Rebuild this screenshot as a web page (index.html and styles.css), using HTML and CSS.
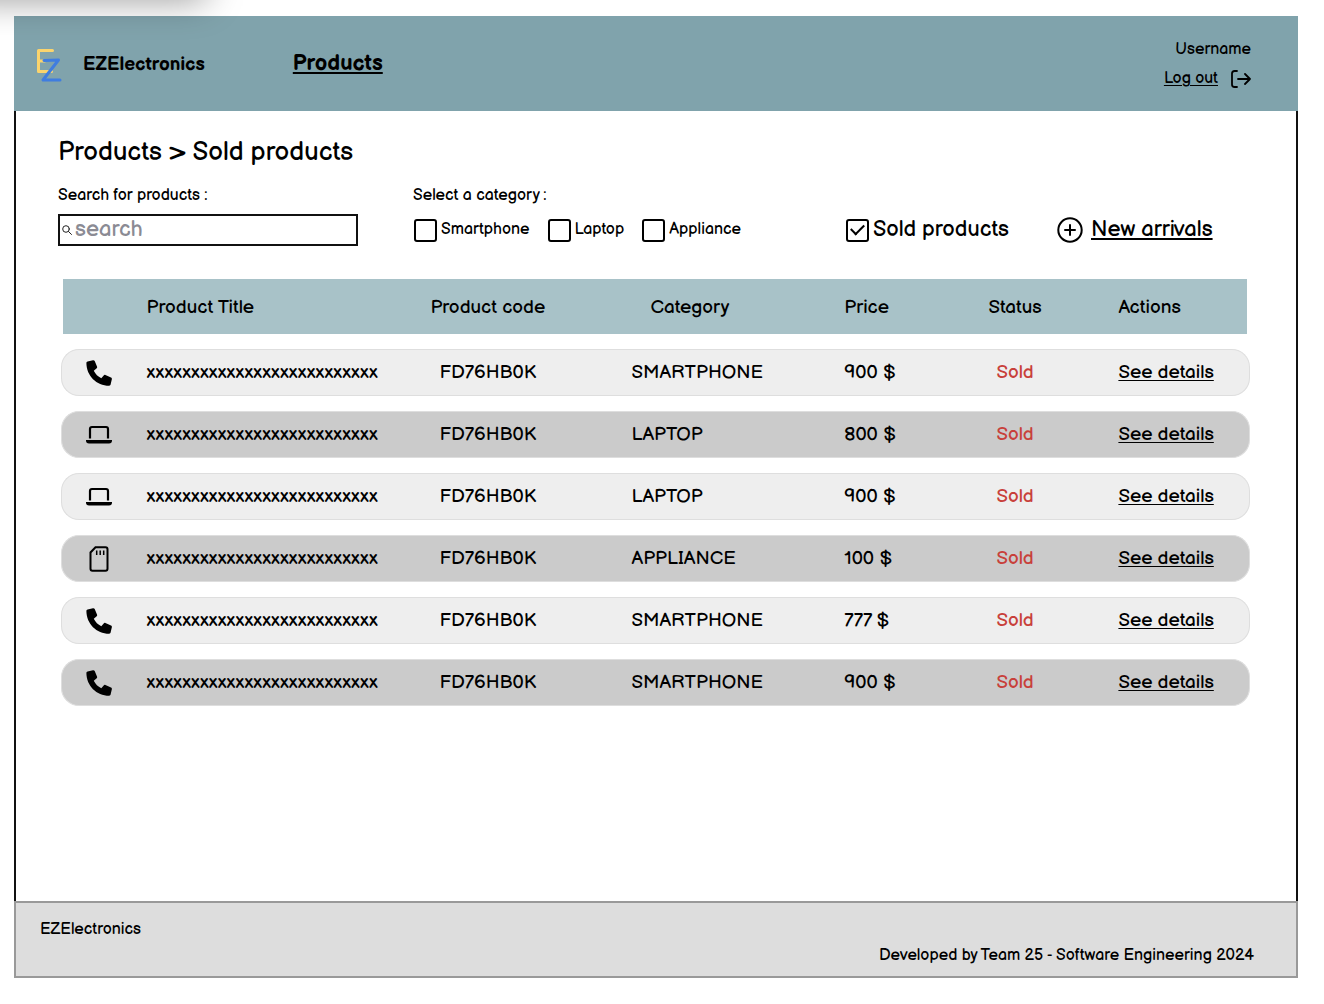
FILE: index.html
```html
<!DOCTYPE html>
<html lang="en">
<head>
<meta charset="utf-8">
<meta name="viewport" content="width=device-width, initial-scale=1">
<title>EZElectronics - Sold products</title>
<link rel="stylesheet" href="styles.css">
</head>
<body>
<svg class="sprite" aria-hidden="true">
  <symbol id="phone" viewBox="0 0 26 26"><path d="M1.6 1.5 7 .2c.7-.2 1.4.2 1.7.8l2.4 5.700c.2.600.1 1.200-.4 1.600L7.800 10.800c1.600 3.300 4.200 5.900 7.500 7.500l2.400-2.900c.4-.5 1.100-.7 1.700-.4l5.600 2.400c.7.3 1 1 .9 1.600L24.600 24.500c-.1.7-.7 1.200-1.400 1.200C10.500 25.700.4 15.500.4 2.900c0-.700.5-1.300 1.200-1.400z"/></symbol>
  <symbol id="laptop" viewBox="0 0 26 26"><path d="M4 16.500V7a2 2 0 0 1 2-2h14a2 2 0 0 1 2 2v9.500" fill="none" stroke="currentColor" stroke-width="2.200"/><path d="M0 18h26v.500a3 3 0 0 1-3 3H3a3 3 0 0 1-3-3z"/></symbol>
  <symbol id="card" viewBox="0 0 26 26"><g fill="none" stroke="currentColor" stroke-width="2"><path d="M9.500 1.200H19.500a2 2 0 0 1 2 2v19.600a2 2 0 0 1-2 2h-13a2 2 0 0 1-2-2V6.500z"/><path d="M10.700 4.500v4.500M14.200 4.500v4.500M17.700 4.500v4.500" stroke-width="1.500"/></g></symbol>
</svg>

<div class="page">
  <header class="topbar">
    <a class="brand" href="#">
      <svg class="logo" viewBox="0 0 26 34" aria-hidden="true" fill="none" stroke-linecap="round" stroke-linejoin="round" stroke-width="3"><path d="M16.500 2.500H2.500v21h13M2.500 13h6" stroke="#fbd46d"/><path d="M8 12.500 22.500 12 7 32H24" stroke="#3f7de0"/></svg>
      <span>EZElectronics</span>
    </a>
    <nav><a class="nav-link" href="#">Products</a></nav>
    <div class="account">
      <span>Username</span>
      <a class="logout" href="#"><span class="underlined">Log out</span>
        <svg class="logout-icon" viewBox="0 0 20 18" aria-hidden="true" fill="none" stroke="currentColor" stroke-width="1.800" stroke-linecap="round" stroke-linejoin="round"><path d="M6 1H3.500Q1 1 1 3.500v11Q1 17 3.500 17H6M7 9h12M14 4l5 5-5 5"/></svg>
      </a>
    </div>
  </header>

  <main class="content">
    <h1>Products &gt; Sold products</h1>
    <form class="filters">
      <div class="field">
        <label class="caption" for="search">Search for products :</label>
        <div class="search">
          <svg viewBox="0 0 10 10" aria-hidden="true" fill="none" stroke="#222" stroke-linecap="round"><circle cx="4" cy="4" r="3.300"/><path d="M6.500 6.500 9.500 9.500"/></svg>
          <input id="search" type="text" placeholder="search">
        </div>
      </div>
      <fieldset class="field">
        <legend class="caption">Select a category :</legend>
        <div class="choices">
          <label><input type="checkbox">Smartphone</label>
          <label><input type="checkbox">Laptop</label>
          <label><input type="checkbox">Appliance</label>
        </div>
      </fieldset>
      <label class="sold-filter"><input type="checkbox" checked>Sold products</label>
      <a class="arrivals" href="#">
        <svg viewBox="0 0 26 26" aria-hidden="true" fill="none" stroke="currentColor" stroke-width="2" stroke-linecap="round"><circle cx="13" cy="13" r="11.700"/><path d="M13 8v10M8 13h10"/></svg>
        <span class="underlined">New arrivals</span>
      </a>
    </form>

    <table class="products">
      <colgroup><col class="c-icon"><col class="c-title"><col class="c-code"><col class="c-category"><col class="c-price"><col class="c-status"><col class="c-actions"></colgroup>
      <thead>
        <tr><th></th><th>Product Title</th><th class="code">Product code</th><th class="code">Category</th><th class="price">Price</th><th class="status">Status</th><th class="actions">Actions</th></tr>
      </thead>
      <tbody>
        <tr><td class="icon"><svg><use href="#phone"/></svg></td><td class="title">xxxxxxxxxxxxxxxxxxxxxxxxxx</td><td class="code">FD76HB0K</td><td class="category">SMARTPHONE</td><td class="price">900 $</td><td class="status">Sold</td><td class="actions"><a href="#">See details</a></td></tr>
        <tr><td class="icon"><svg><use href="#laptop"/></svg></td><td class="title">xxxxxxxxxxxxxxxxxxxxxxxxxx</td><td class="code">FD76HB0K</td><td class="category">LAPTOP</td><td class="price">800 $</td><td class="status">Sold</td><td class="actions"><a href="#">See details</a></td></tr>
        <tr><td class="icon"><svg><use href="#laptop"/></svg></td><td class="title">xxxxxxxxxxxxxxxxxxxxxxxxxx</td><td class="code">FD76HB0K</td><td class="category">LAPTOP</td><td class="price">900 $</td><td class="status">Sold</td><td class="actions"><a href="#">See details</a></td></tr>
        <tr><td class="icon"><svg><use href="#card"/></svg></td><td class="title">xxxxxxxxxxxxxxxxxxxxxxxxxx</td><td class="code">FD76HB0K</td><td class="category">APPLIANCE</td><td class="price">100 $</td><td class="status">Sold</td><td class="actions"><a href="#">See details</a></td></tr>
        <tr><td class="icon"><svg><use href="#phone"/></svg></td><td class="title">xxxxxxxxxxxxxxxxxxxxxxxxxx</td><td class="code">FD76HB0K</td><td class="category">SMARTPHONE</td><td class="price">777 $</td><td class="status">Sold</td><td class="actions"><a href="#">See details</a></td></tr>
        <tr><td class="icon"><svg><use href="#phone"/></svg></td><td class="title">xxxxxxxxxxxxxxxxxxxxxxxxxx</td><td class="code">FD76HB0K</td><td class="category">SMARTPHONE</td><td class="price">900 $</td><td class="status">Sold</td><td class="actions"><a href="#">See details</a></td></tr>
      </tbody>
    </table>
  </main>

  <footer class="footer">
    <span>EZElectronics</span>
    <span class="credit">Developed by Team 25 - Software Engineering 2024</span>
  </footer>
</div>
</body>
</html>
```
FILE: styles.css
```css
* { box-sizing: border-box; }

body {
  margin: 0;
  min-height: 100vh;
  padding: 16px 26px 26px 14px;
  display: flex;
  background: #fff;
  color: #000;
  font: 400 19px/24px "Balsamiq Sans", Lato, "Noto Sans", sans-serif;
}

/* soft shadow falling in from the top left corner */
body::before {
  content: "";
  position: absolute;
  top: -40px;
  left: -40px;
  width: 246px;
  height: 40px;
  box-shadow: 0 0 36px rgba(0, 0, 0, .4);
  pointer-events: none;
}

a { color: inherit; text-decoration: none; }
svg { display: block; flex: none; fill: currentColor; }
.sprite { display: none; }
.underlined { text-decoration: underline; text-underline-offset: 2px; }

.page { flex: 1; min-width: 0; display: flex; flex-direction: column; }

.topbar {
  min-height: 95px;
  padding: 2px 47px 0 22px;
  display: flex;
  align-items: center;
  background: #80a3ac;
}
.brand { display: flex; align-items: center; gap: 21px; font-weight: 700; }
.logo { width: 26px; height: 34px; fill: none; }
.nav-link {
  margin-left: 88px;
  font-size: 22px;
  font-weight: 700;
  text-decoration: underline;
  text-underline-offset: 2px;
}
.account {
  margin-left: auto;
  display: flex;
  flex-direction: column;
  align-items: flex-end;
  gap: 5px;
  font-size: 16px;
}
.logout { display: flex; align-items: center; gap: 13px; }
.logout-icon { width: 20px; height: 18px; fill: none; }

.content {
  flex: 1;
  padding: 26px 46px 30px 42px;
  border: solid #111;
  border-width: 0 2px;
}
h1 { margin: 0; font-size: 26px; font-weight: 400; line-height: 32px; }

.filters {
  margin-top: 15px;
  display: grid;
  grid-template-columns: 355fr 433fr 211fr 193fr;
  align-items: end;
}
.field { margin: 0; padding: 0; border: 0; min-width: 0; }
.caption { display: block; padding: 0; font-size: 16px; line-height: 24px; }
.search {
  width: 300px;
  max-width: 100%;
  height: 32px;
  margin-top: 6px;
  padding: 0 2px;
  display: flex;
  align-items: center;
  gap: 3px;
  border: 2px solid #111;
}
.search svg { width: 10px; height: 10px; fill: none; }
.search input {
  flex: 1;
  min-width: 0;
  padding: 0;
  border: 0;
  outline: 0;
  background: none;
  font: inherit;
  font-size: 22px;
}
.search input::placeholder { color: #8b8b94; opacity: 1; }

.choices { height: 32px; margin-top: 6px; padding-left: 1px; display: flex; align-items: center; gap: 18px; font-size: 16px; }
.choices label, .sold-filter { display: flex; align-items: center; gap: 4px; white-space: nowrap; }
.sold-filter, .arrivals { height: 32px; font-size: 22px; }
.arrivals { display: flex; align-items: center; gap: 8px; white-space: nowrap; }
.arrivals svg { width: 26px; height: 26px; fill: none; }

input[type="checkbox"] {
  appearance: none;
  flex: none;
  width: 23px;
  height: 23px;
  margin: 0;
  display: grid;
  place-items: center;
  border: 2px solid #000;
  border-radius: 3px;
}
input[type="checkbox"]:checked::before {
  content: "";
  width: 11px;
  height: 6px;
  margin-bottom: 4px;
  border: solid #000;
  border-width: 0 0 2px 2px;
  rotate: -45deg;
}

.products {
  width: calc(100% - 3px);
  margin: 18px 0 0 3px;
  table-layout: fixed;
  border-collapse: separate;
  border-spacing: 0 15px;
}
.c-icon { width: 7.2%; }
.c-title { width: 22.5%; }
.c-code { width: 12.4%; }
.c-category { width: 21.6%; }
.c-price { width: 11.9%; }
.c-status { width: 9.3%; }
.products th, .products td { padding: 0; text-align: left; font-weight: 400; white-space: nowrap; }
.products th { height: 55px; padding-top: 3px; background: #a8c2c8; }
.products th:first-child { border-left: 2px solid #fff; }
.products th:last-child { border-right: 3px solid #fff; }
.products td { height: 47px; border: solid #dedede; border-width: 1px 0; background: #eee; }
.products tr:nth-child(even) td { background: #cbcbcb; }
.products td:first-child { border-left-width: 1px; border-radius: 18px 0 0 18px; }
.products td:last-child { border-right-width: 1px; border-radius: 0 18px 18px 0; }
.products .icon { padding-left: 24px; }
.icon svg { width: 26px; height: 26px; }
.products .code, .products .status { text-align: center; }
.products .category { padding-left: 70px; }
.products .price { padding-left: 26px; }
.products td.status { color: #c8403a; }
.products .actions { padding-left: 48px; }
.actions a { text-decoration: underline; text-underline-offset: 2px; }

.footer {
  min-height: 77px;
  padding: 15px 42px 7px 24px;
  display: flex;
  flex-direction: column;
  gap: 2px;
  border: 2px solid #999;
  background: #ddd;
  font-size: 16px;
}
.credit { align-self: flex-end; }
```
